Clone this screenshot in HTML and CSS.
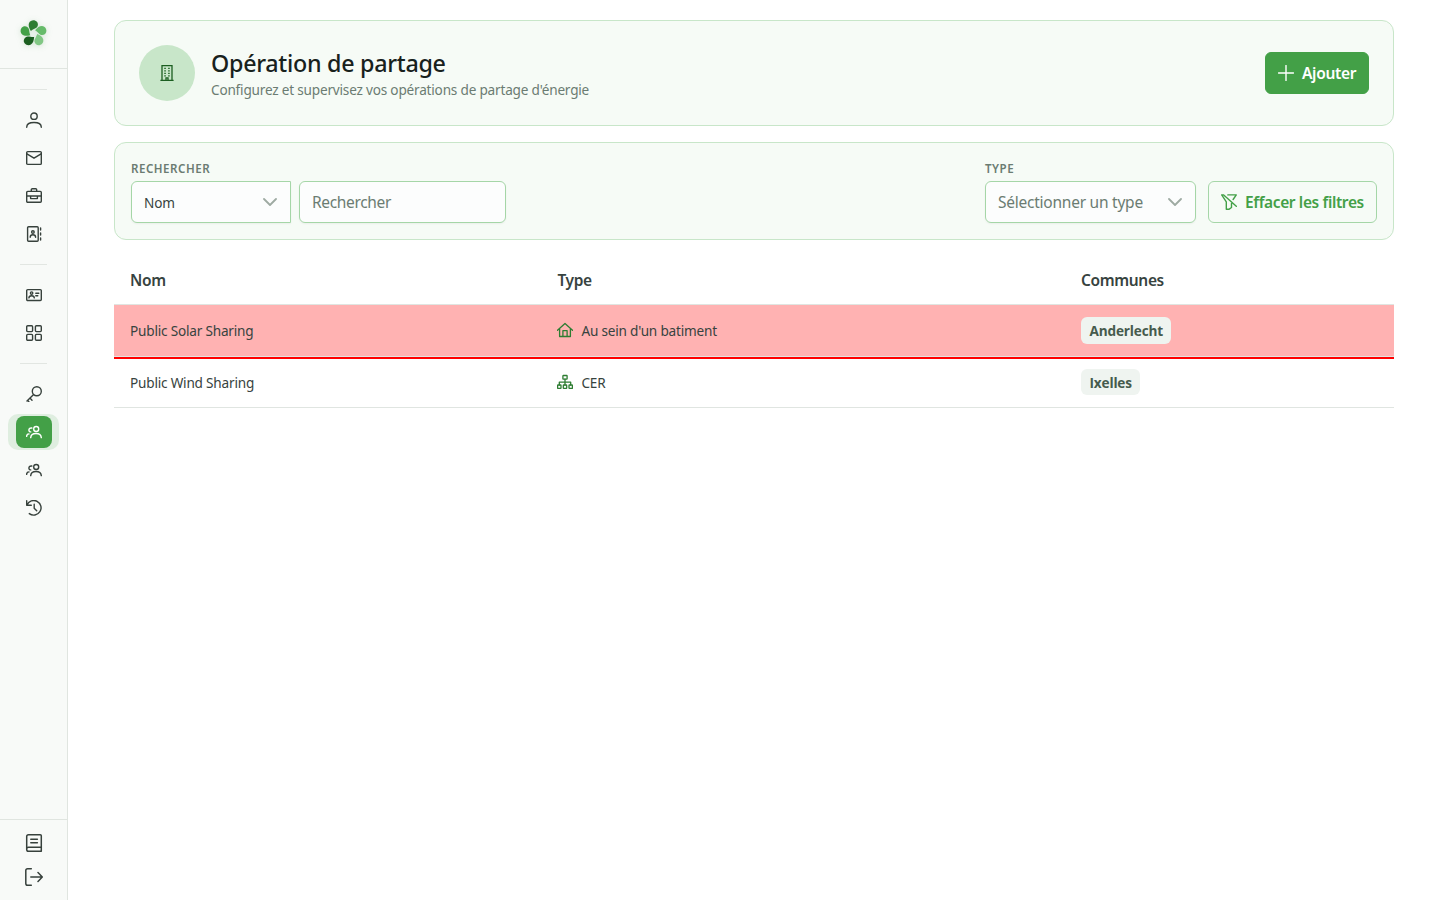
FILE: index.html
```html
<!DOCTYPE html>
<html lang="fr">
<head>
<meta charset="utf-8">
<title>Opération de partage</title>
<link rel="stylesheet" href="styles.css">
</head>
<body>
<svg class="defs" width="0" height="0">
  <symbol id="users" viewBox="0 0 16 16"><circle cx="10.200" cy="5" r="2.500"/><path d="M4.700 13.600c.2-3 1.900-4.100 5.300-4.100s5.100 1.100 5.300 4.100M5.800 4C4.200 3.700 2.900 4.600 2.900 6S3.900 8 4.700 7.900M.6 12.400C.7 10.500 1.500 9.900 3 9.900"/></symbol>
  <symbol id="chevron" viewBox="0 0 14 14"><path d="M1 4l6 6 6-6"/></symbol>
</svg>
<div class="app">
  <aside class="sidebar">
    <div class="brand">
      <svg class="logo" viewBox="-14 -14 28 28">
        <path fill="#2e7d32" d="M-2.700-2.600C-4.700-5.800-5.500-8.500-4.600-10.900C-3.600-13.300-.8-14.300 1.500-13.600C4.200-12.700 5.100-10.100 4.300-7.800C3.500-5.300 0-5-2.700-2.600Z"/>
        <path fill="#66bb6a" transform="rotate(72)" d="M-2.700-2.600C-4.700-5.800-5.500-8.500-4.600-10.900C-3.600-13.300-.8-14.300 1.500-13.600C4.200-12.700 5.100-10.100 4.300-7.800C3.500-5.300 0-5-2.700-2.600Z"/>
        <path fill="#81c784" transform="rotate(144)" d="M-2.700-2.600C-4.700-5.800-5.500-8.500-4.600-10.900C-3.600-13.300-.8-14.300 1.500-13.600C4.200-12.700 5.100-10.100 4.300-7.800C3.500-5.300 0-5-2.700-2.600Z"/>
        <path fill="#1b5e20" transform="rotate(216)" d="M-2.700-2.600C-4.700-5.800-5.500-8.500-4.600-10.900C-3.600-13.300-.8-14.300 1.500-13.600C4.200-12.700 5.100-10.100 4.300-7.800C3.500-5.300 0-5-2.700-2.600Z"/>
        <path fill="#43a047" transform="rotate(288)" d="M-2.700-2.600C-4.700-5.800-5.500-8.500-4.600-10.900C-3.600-13.300-.8-14.300 1.500-13.600C4.200-12.700 5.100-10.100 4.300-7.800C3.500-5.300 0-5-2.700-2.600Z"/>
      </svg>
    </div>
    <nav class="nav">
      <div class="group">
        <a class="item"><svg class="icon" viewBox="0 0 16 16"><circle cx="8" cy="4.200" r="3.200"/><path d="M.7 15.200c0-3.400 2.300-4.700 7.300-4.700s7.300 1.300 7.300 4.700"/></svg></a>
        <a class="item"><svg class="icon" viewBox="0 0 16 16"><rect x=".7" y="1.600" width="14.600" height="12.800" rx="1"/><path d="M.9 3.800L8 8.200l7.100-4.400"/></svg></a>
        <a class="item"><svg class="icon" viewBox="0 0 16 16"><rect x=".7" y="3.400" width="14.600" height="10.900" rx="1"/><path d="M5.300 3.400V1.800q0-1 1-1h3.400q1 0 1 1v1.600M.7 8h14.600M4.600 8v2.600h6.800V8"/></svg></a>
        <a class="item"><svg class="icon" viewBox="0 0 16 16"><rect x="1.600" y=".7" width="10.600" height="14.600" rx="1"/><circle cx="6.900" cy="6" r="1.300"/><path d="M4.200 11.200c0-1.900 1-2.500 2.700-2.500s2.700.6 2.700 2.500M14.600 2v2M14.600 7v2M14.600 12v2"/></svg></a>
      </div>
      <div class="group">
        <a class="item"><svg class="icon" viewBox="0 0 16 16"><rect x=".7" y="2.600" width="14.600" height="10.900" rx="1"/><circle cx="5.600" cy="6.100" r="1.200"/><path d="M2.900 10.900c0-1.700 1-2.200 2.700-2.200s2.700.5 2.700 2.200M9.800 6.200h3M9.800 8.800h2"/></svg></a>
        <a class="item"><svg class="icon" viewBox="0 0 16 16"><rect x=".7" y=".7" width="5.900" height="5.900" rx="1"/><rect x="9.400" y=".7" width="5.900" height="5.900" rx="1"/><rect x=".7" y="9.400" width="5.900" height="5.900" rx="1"/><rect x="9.400" y="9.400" width="5.900" height="5.900" rx="1"/></svg></a>
      </div>
      <div class="group">
        <a class="item"><svg class="icon" viewBox="0 0 16 16"><circle cx="10.800" cy="5.200" r="4.500"/><path d="M7.600 8.400L1 15M3.900 12.100l2.100 2.100M1.600 14.400l1.300 1.300"/></svg></a>
        <a class="item active"><span class="tile"><svg class="icon"><use href="#users"/></svg></span></a>
        <a class="item"><svg class="icon"><use href="#users"/></svg></a>
        <a class="item"><svg class="icon" viewBox="0 0 16 16"><path d="M.7.7v4.600h4.600M1 5A7.300 7.300 0 1 1 3.300 13.600M8.200 4.200v4l2.500 2.600"/></svg></a>
      </div>
    </nav>
    <div class="foot">
      <svg class="icon large" viewBox="0 0 18 18"><path d="M16.300 13.200V1.800q0-1-1-1H3.500Q1.700.8 1.700 2.600v12.800q0 1.800 1.800 1.800h12.800v-4H3.500q-1.800 0-1.800 1.800M5.800 5.300h6.600M5.800 8.800h6.600"/></svg>
      <svg class="icon large" viewBox="0 0 18 18"><path d="M6.300.8H2.600Q.8.8.8 2.600v12.800q0 1.800 1.800 1.800h3.700M5.800 9h11.400M13 4.600L17.300 9 13 13.400"/></svg>
    </div>
  </aside>
  <main class="content">
    <section class="panel heading">
      <div class="avatar"><svg class="building" viewBox="0 0 16 16"><path d="M3 15V.7h10V15M1.400 15.300h13.200M7 15v-2.200h2V15"/><path class="windows" d="M5.300 3.400h1.500M9.200 3.400h1.500M5.300 5.900h1.500M9.200 5.900h1.500M5.300 8.400h1.500M9.200 8.400h1.500M5.300 10.900h1.500M9.200 10.900h1.500"/></svg></div>
      <div class="titles">
        <h1 class="title">Opération de partage</h1>
        <p class="subtitle">Configurez et supervisez vos opérations de partage d'énergie</p>
      </div>
      <button class="btn primary"><svg class="icon" viewBox="0 0 16 16"><path d="M8 .5v15M.5 8h15"/></svg><span>Ajouter</span></button>
    </section>
    <section class="panel filters">
      <div class="field">
        <span class="label">RECHERCHER</span>
        <div class="controls">
          <div class="control by"><span class="small">Nom</span><svg class="chevron"><use href="#chevron"/></svg></div>
          <div class="control search"><span class="placeholder">Rechercher</span></div>
        </div>
      </div>
      <div class="field">
        <span class="label">TYPE</span>
        <div class="controls wide">
          <div class="control type"><span class="placeholder long">Sélectionner un type</span><svg class="chevron"><use href="#chevron"/></svg></div>
          <button class="btn outline"><svg class="icon" viewBox="0 0 16 16"><path d="M.7.9h2L15.300 12.300M6.800.9h8.500l-3.200 4.600M.7.9l4.600 6.900v7.500h2.600l2.600-1.800v-4"/></svg><span>Effacer les filtres</span></button>
        </div>
      </div>
    </section>
    <div class="table">
      <div class="row head"><span>Nom</span><span>Type</span><span>Communes</span></div>
      <div class="row picked">
        <span class="cell">Public Solar Sharing</span>
        <span class="kind"><svg class="icon" viewBox="0 0 16 16"><path d="M.5 8.200L8 1.500l7.500 6.700M2.600 6.500v8h10.800v-8M5.900 14.500V8.600h4.200v5.900"/></svg><span class="cell">Au sein d'un batiment</span></span>
        <span><b class="tag tall">Anderlecht</b></span>
      </div>
      <div class="row">
        <span class="cell">Public Wind Sharing</span>
        <span class="kind"><svg class="icon" viewBox="0 0 16 16"><rect x="5.900" y="1.500" width="4.200" height="3.700" rx=".4"/><rect x=".6" y="11" width="3.400" height="3.400" rx=".4"/><rect x="6.300" y="11" width="3.400" height="3.400" rx=".4"/><rect x="12" y="11" width="3.400" height="3.400" rx=".4"/><path d="M8 5.200V11M2.300 11V8.200h11.400V11"/></svg><span class="cell">CER</span></span>
        <span><b class="tag">Ixelles</b></span>
      </div>
    </div>
  </main>
</div>
</body>
</html>
```
FILE: styles.css
```css
* { box-sizing: border-box; }
body { margin: 0; background: #fff; color: #374340; font-family: "Segoe UI", "Noto Sans", "Open Sans", sans-serif; }
.defs { display: block; height: 0; }
.app { display: flex; height: 900px; }
svg { display: block; flex: none; }
.icon { width: 16px; height: 16px; fill: none; stroke: currentColor; stroke-width: 1.4; stroke-linecap: round; stroke-linejoin: round; }
.icon.large { width: 18px; height: 18px; stroke-width: 1.5; }

.sidebar { display: flex; flex-direction: column; width: 68px; background: #f8faf8; border-right: 1px solid #e0e5e0; color: #37413c; }
.brand { display: flex; align-items: center; justify-content: center; height: 69px; padding-bottom: 1px; border-bottom: 1px solid #e0e5e0; }
.logo { width: 27px; height: 27px; filter: drop-shadow(0 1px 3px rgba(46, 125, 50, .18)); }
.nav { flex: 1; display: flex; flex-direction: column; gap: 12px; padding: 20px 8px 0; }
.group { display: flex; flex-direction: column; gap: 2px; }
.group::before { content: ""; height: 1px; margin: 0 12px 10px; background: #e2e6e2; }
.item { display: flex; align-items: center; justify-content: center; width: 51px; height: 36px; padding-left: 1px; border-radius: 10px; }
.active { background: #dfeee0; }
.tile { display: flex; align-items: center; justify-content: center; width: 36px; height: 32px; border-radius: 8px; background: #43a047; color: #fff; }
.foot { display: flex; flex-direction: column; align-items: center; gap: 16px; height: 81px; padding: 14px 0 0 1px; border-top: 1px solid #e0e5e0; }

.content { flex: 1; display: flex; flex-direction: column; gap: 16px; padding: 20px 46px; }
.panel { display: flex; border: 1px solid #c8e6c9; border-radius: 12px; background: #f6fbf6; }
.heading { align-items: center; height: 106px; padding: 0 24px; gap: 16px; }
.avatar { display: flex; align-items: center; justify-content: center; width: 56px; height: 56px; border-radius: 50%; background: #c8e6c9; color: #1b5e20; }
.building { width: 16px; height: 16px; fill: none; stroke: currentColor; stroke-width: 1.3; }
.windows { stroke-width: 1.3; }
.titles { flex: 1; white-space: nowrap; }
.title { margin: 0; padding-top: 1px; color: #18211c; font-size: 23.3px; line-height: 32px; font-weight: 500; letter-spacing: -.29px; }
.subtitle { margin: 0; color: #6b7c72; font-size: 13.6px; line-height: 21px; letter-spacing: -.2px; }
.btn { display: flex; align-items: center; gap: 8px; height: 42px; padding: 0 12px; border: 1px solid #43a047; border-radius: 6px; font: 600 15.5px/24px "Segoe UI", "Noto Sans", sans-serif; letter-spacing: -.32px; white-space: nowrap; }
.primary { width: 104px; background: #43a047; color: #fff; }
.outline { width: 169px; border-color: #a5d6a7; background: transparent; color: #43a047; letter-spacing: -.37px; }

.filters { justify-content: space-between; height: 98px; padding: 16px; }
.field { display: flex; flex-direction: column; gap: 4px; }
.label { height: 18px; padding-top: 1px; color: #6b7c72; font-size: 11.6px; line-height: 18px; font-weight: 600; letter-spacing: .5px; }
.controls { display: flex; gap: 8px; }
.wide { gap: 12px; }
.control { display: flex; align-items: center; justify-content: space-between; height: 42px; padding: 0 12px; border: 1px solid #a5d6a7; border-radius: 6px; background: #fcfdfd; box-shadow: 0 1px 2px rgba(18, 18, 23, .05); white-space: nowrap; }
.by { width: 160px; border-radius: 6px 0 0 6px; padding-right: 13px; }
.search { width: 207px; }
.type { width: 211px; padding-right: 13px; }
.small { padding-top: 1px; font-size: 13.6px; line-height: 20px; letter-spacing: -.2px; }
.placeholder { color: #6b7c72; font-size: 15.5px; line-height: 24px; letter-spacing: -.33px; }
.long { letter-spacing: -.24px; }
.chevron { width: 14px; height: 14px; fill: none; stroke: #9eaaa2; stroke-width: 1.8; stroke-linecap: round; stroke-linejoin: round; }

.row { display: grid; grid-template-columns: 427.4px 523.6px 1fr; align-items: center; height: 49px; padding: 0 16px 2px; border-bottom: 1px solid #e0e5e1; white-space: nowrap; }
.head { padding-bottom: 0; font-size: 15.5px; line-height: 24px; font-weight: 600; letter-spacing: -.35px; }
.picked { height: 52px; padding-bottom: 1px; background: #ffb2b2; }
.picked + .row { height: 51px; border-top: 2px solid #f00; }
.kind { display: flex; align-items: center; gap: 8px; }
.kind .icon { color: #2e7d32; stroke-width: 1.3; }
.cell { font-size: 13.6px; line-height: 21px; letter-spacing: -.2px; }
.tag { display: flex; align-items: center; width: max-content; height: 26px; padding: 0 8px 0 8.5px; border-radius: 6px; background: #eff4f0; color: #465b4d; font-family: "Segoe UI", "Open Sans", sans-serif; font-size: 13.6px; line-height: 21px; font-weight: 700; letter-spacing: -.16px; }
.tall { height: 27px; }
```
